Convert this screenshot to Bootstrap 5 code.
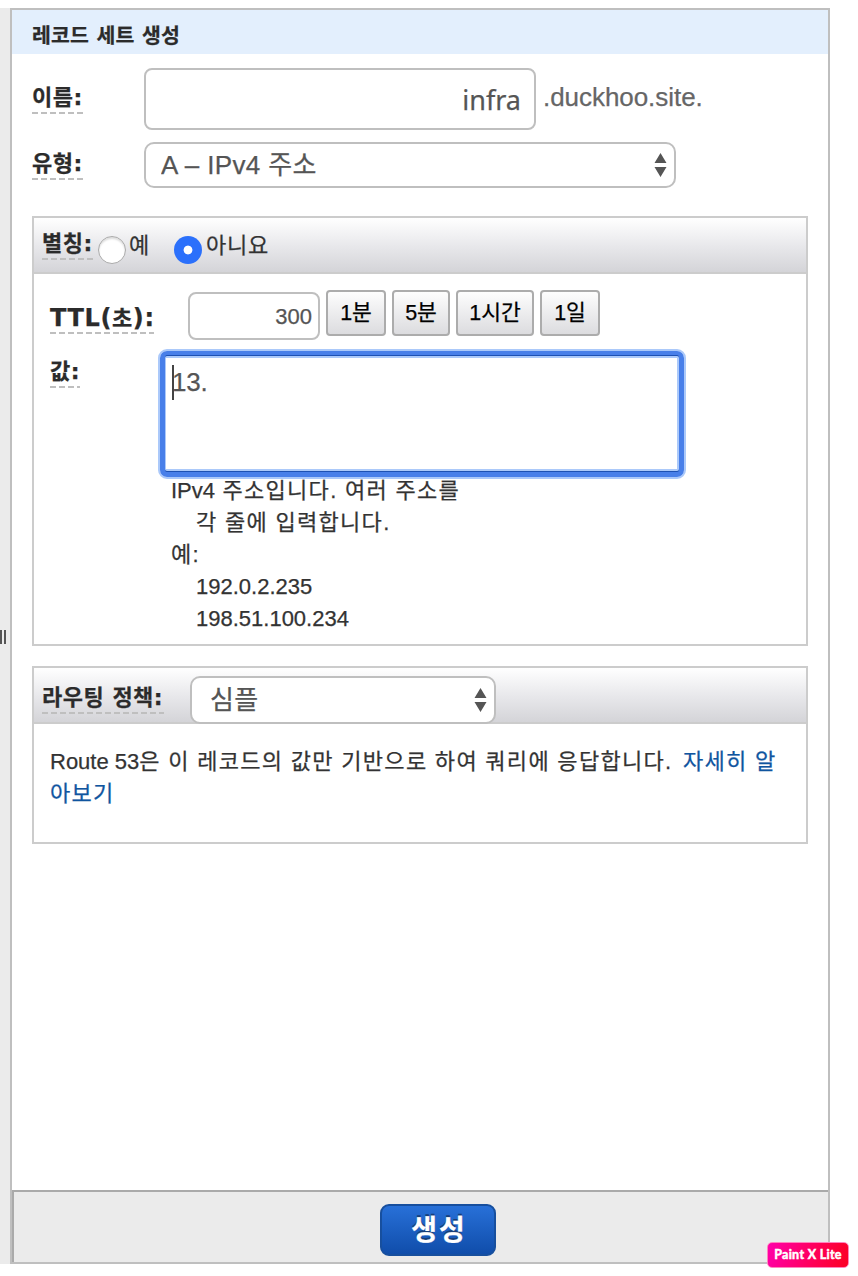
<!DOCTYPE html>
<html lang="ko">
<head>
<meta charset="utf-8">
<meta name="viewport" content="width=device-width, initial-scale=1">
<title>레코드 세트 생성</title>
<link href="https://cdn.jsdelivr.net/npm/bootstrap@5.3.0/dist/css/bootstrap.min.css" rel="stylesheet">
<style>
body{width:858px;height:1276px;overflow:hidden;padding-top:8px;background:#fff;color:#333;font:22px/32px "Liberation Sans","Noto Sans CJK KR",sans-serif;-webkit-text-stroke:.25px}
.splitter{width:10px;height:1256px;background:#ebebeb;padding-top:622px}
.splitter svg{display:block}
.panel{width:820px;height:1256px;border:2px solid #bfbfbf}
.panel-title{height:44px;background:#e3effd;padding:4px 0 0 20px;font:700 20.5px/44px "DejaVu Sans","Noto Sans CJK KR",sans-serif;letter-spacing:.2px}
.panel-title,.lbl{color:#2b2b2b}
.lbl{display:block;font:700 22px/34px "DejaVu Sans","Noto Sans CJK KR",sans-serif;letter-spacing:.5px;height:33px;white-space:nowrap;background:repeating-linear-gradient(90deg,#bfbfbf 0 6px,transparent 6px 9px) left bottom/100% 2px no-repeat}
.w-label{width:112px}
.field{border:2px solid #bfbfbf;border-radius:8px;background:#fff;color:#555;box-shadow:none}
.name-in{width:392px;height:62px;font:27px/32px "Noto Sans","Liberation Sans",sans-serif;padding:0 13px 0 12px}
.domain{color:#666;font-size:26px;padding:13px 0 0 7px;letter-spacing:-.05px}
.picker{border-radius:10px;font-size:26px;line-height:1}
.picker select{appearance:none;border:0;outline:0;background:transparent;color:#555;width:100%;height:100%;padding:0 0 1px;letter-spacing:.35px}
.picker svg{position:absolute;right:7px}
.box{width:776px;border:2px solid #ccc}
.box-head{height:56px;border-bottom:2px solid #ccc;background:linear-gradient(#fff,#e8e8eb 52%,#d4d4d8)}
.dot{appearance:none;width:28px;height:28px;border-radius:50%;border:1.5px solid #aaa;background:#fff;box-shadow:inset 0 2px 2px #ddd;margin:0}
.dot:checked{border:0;background:radial-gradient(circle,#fff 0 4px,#2b70fb 4.8px);box-shadow:none}
.ttl-in{width:132px;height:48px;font:22px/32px "Liberation Sans",sans-serif;padding:1px 6px 0}
.btn-time{height:46px;border:2px solid #acacac;border-radius:4px;background:linear-gradient(#fdfdfd,#dcdcdf);color:#000;padding:0;font-size:21.5px;line-height:40px}
.value-in{width:514px;height:115px;margin-top:1px;border:2px solid #abc9fa;border-left-width:1px;border-radius:2px;outline:0;resize:none;color:#555;background:#fff;font:26px/34px "Liberation Sans",sans-serif;padding:7px 0 0 6px;display:block;letter-spacing:-.2px}
.value-wrap{width:528px;height:130px;border:2px solid #abc9fa;border-radius:9px}
.ring{height:126px;border:5px solid #487fe9;border-top-width:4px;border-radius:7px;background:#1d51b3;padding-top:1px}
.caret{left:7px;top:10px;width:2px;height:35px;background:#444}
.help{letter-spacing:1.3px}
.help .lat,.route .lat{letter-spacing:0}
.route{letter-spacing:1.3px}
.route a{color:#10559f;text-decoration:none}
.foot{height:72px;background:#ebebeb;border:solid #aaa;border-width:2px 0 0 2px}
.btn-create{width:116px;height:52px;border:2px solid #174f9e;border-radius:9px;background:linear-gradient(#2870d8,#104daa);color:#fff;font:700 28px/42px "Noto Sans CJK KR",sans-serif;text-shadow:0 -2px #173e78;letter-spacing:2px;padding:0 0 4px 2px}
.btn-create:hover{color:#fff}
.stamp{left:767px;top:1242px;width:82px;height:26px;border-radius:5px;border:1px solid #ff84be;background:linear-gradient(105deg,#ff00aa,#ff0055 60%,#fb0023);color:#fff;font:700 12.5px/23px Lato,sans-serif;letter-spacing:.3px;-webkit-text-stroke:.5px #fff}
</style>
</head>
<body>
<div class="d-flex">
  <aside class="splitter flex-shrink-0"><svg width="7" height="14"><path fill="#555" d="M0 0h2v14H0zM4 0h2v14H4z"/></svg></aside>
  <main class="panel d-flex flex-column">
    <h1 class="panel-title m-0">레코드 세트 생성</h1>
    <form class="flex-grow-1 d-flex flex-column" style="padding:14px 20px 0">
      <div class="d-flex">
        <div class="w-label"><label class="lbl" style="width:52px;margin-top:13px">이름:</label></div>
        <input class="field name-in text-end" value="infra"><span class="domain">.duckhoo.site.</span>
      </div>
      <div class="d-flex" style="margin-top:12px">
        <div class="w-label"><label class="lbl" style="width:52px;margin-top:5px">유형:</label></div>
        <div class="field picker position-relative" style="width:532px;height:46px;padding:0 15px">
          <select><option>A – IPv4 주소</option></select>
          <svg style="top:9px" width="13" height="24" fill="#555"><path d="M6.500 0L12.500 10H.5zM.5 14h12L6.500 24z"/></svg>
        </div>
      </div>
      <section class="box" style="height:430px;margin-top:28px">
        <div class="box-head d-flex" style="padding-left:8px">
          <label class="lbl" style="width:52px;margin-top:9px">별칭:</label>
          <input class="dot" type="radio" name="alias" style="margin:18px 0 0 4px"><span style="margin:12px 0 0 3px;width:45px">예</span>
          <input class="dot" type="radio" name="alias" checked style="margin-top:18px"><span style="margin:12px 0 0 4px;letter-spacing:.8px">아니요</span>
        </div>
        <div style="padding:16px 0 0 16px">
          <div class="d-flex">
            <label class="lbl" style="width:104px;margin:11px 34px 0 0;font-size:24px;letter-spacing:.6px">TTL(<span style="font-size:22px">초</span>):</label>
            <input class="field ttl-in text-end" style="margin-top:2px" value="300">
            <button type="button" class="btn btn-time" style="width:60px;margin-left:6px">1분</button>
            <button type="button" class="btn btn-time" style="width:58px;margin-left:6px">5분</button>
            <button type="button" class="btn btn-time" style="width:78px;margin-left:6px">1시간</button>
            <button type="button" class="btn btn-time" style="width:60px;margin-left:6px">1일</button>
          </div>
          <div class="d-flex" style="margin-top:9px">
            <label class="lbl" style="width:30px;margin:6px 78px 0 0">값:</label>
            <div class="value-wrap"><div class="ring position-relative"><textarea class="value-in mt-0">13.</textarea><span class="caret position-absolute"></span></div></div>
          </div>
          <div class="help" style="padding-left:121px;margin-top:-4px">
            <div><span class="lat">IPv4</span> 주소입니다. 여러 주소를</div>
            <div style="padding-left:25px">각 줄에 입력합니다.</div>
            <div>예:</div>
            <div class="lat" style="padding-left:25px">192.0.2.235</div>
            <div class="lat" style="padding-left:25px">198.51.100.234</div>
          </div>
        </div>
      </section>
      <section class="box" style="height:178px;margin-top:20px">
        <div class="box-head d-flex" style="padding-left:8px">
          <label class="lbl" style="width:122px;margin:13px 26px 0 0">라우팅 정책:</label>
          <div class="field picker position-relative" style="width:306px;height:48px;margin-top:8px;padding:0 18px">
            <select><option>심플</option></select>
            <svg style="top:10px" width="13" height="24" fill="#555"><path d="M6.500 0L12.500 10H.5zM.5 14h12L6.500 24z"/></svg>
          </div>
        </div>
        <p class="route m-0" style="padding:22px 0 0 16px"><span class="lat">Route 53</span>은 이 레코드의 값만 기반으로 하여 쿼리에 응답합니다. <a href="#" style="margin-left:3px">자세히 알<br>아보기</a></p>
      </section>
    </form>
    <footer class="foot text-center d-flex"><button class="btn btn-create" style="margin:12px 0 0 366px">생성</button></footer>
  </main>
</div>
<div class="stamp position-absolute text-center">Paint X Lite</div>
</body>
</html>
